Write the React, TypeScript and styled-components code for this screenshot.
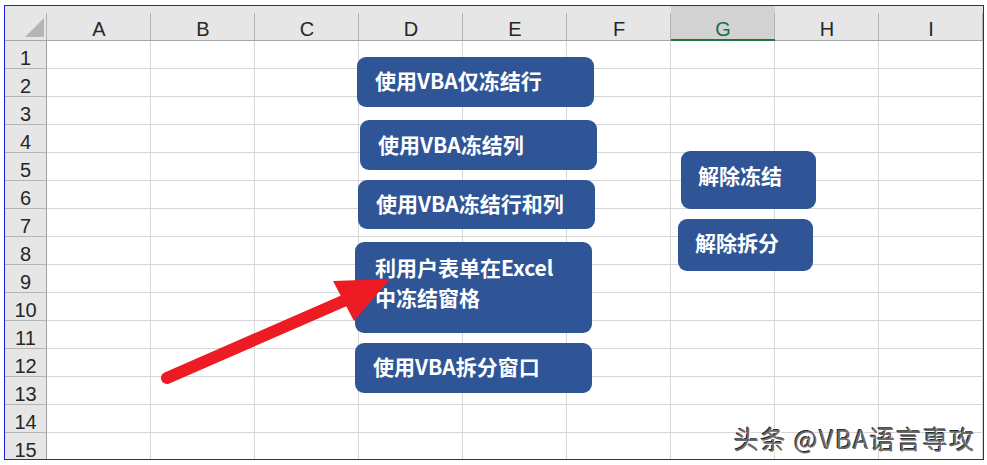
import React from "react";
import styled, { createGlobalStyle } from "styled-components";

const Global = createGlobalStyle`
  html, body { margin: 0; padding: 0; background: #ffffff; }
  body { font-family: "Liberation Sans", "Noto Sans CJK SC", sans-serif; }
  * { box-sizing: border-box; }
`;

const Page = styled.div`
  position: relative;
  width: 987px;
  height: 465px;
  overflow: hidden;
  background: #ffffff;
  padding: 5px 0 0 4px;
`;

const Frame = styled.div`
  width: 980px;
  height: 455px;
  border: 1px solid #1f1fe6;
  overflow: hidden;
  display: grid;
  grid-template-columns: 42px repeat(9, 104px);
  grid-template-rows: 35px repeat(15, 28px);
  background: #ffffff;
`;

const HeaderBase = styled.div`
  background:
    linear-gradient(#b1b1b1, #b1b1b1) right 7px / 1px calc(100% - 7px) no-repeat,
    #e6e6e6;
  border-bottom: 1px solid #a6a6a6;
`;

const Corner = styled(HeaderBase)`
  display: flex;
  align-items: flex-end;
  justify-content: flex-end;
  padding: 0 3px 3px 0;
`;

const ColHeader = styled(HeaderBase)<{ $selected?: boolean }>`
  display: flex;
  align-items: flex-end;
  justify-content: center;
  padding-bottom: ${(p) => (p.$selected ? "0px" : "1px")};
  font-family: "Liberation Sans", sans-serif;
  font-size: 20px;
  line-height: 20px;
  color: ${(p) => (p.$selected ? "#1f6b47" : "#262626")};
  background:
    linear-gradient(#b1b1b1, #b1b1b1) right 7px / 1px calc(100% - 7px) no-repeat,
    ${(p) => (p.$selected ? "#d2d2d2" : "#e6e6e6")};
  border-bottom: ${(p) => (p.$selected ? "2px solid #217346" : "1px solid #a6a6a6")};
`;

const RowHeader = styled.div`
  display: flex;
  align-items: flex-end;
  justify-content: center;
  background: #e6e6e6;
  border-right: 1px solid #9e9e9e;
  border-bottom: 1px solid #b4b4b4;
  font-family: "Liberation Sans", sans-serif;
  font-size: 20px;
  line-height: 20px;
  color: #262626;
`;

const Cell = styled.div`
  border-right: 1px solid #d6d6d6;
  border-bottom: 1px solid #d6d6d6;
`;

const Shape = styled.div<{ $x: number; $y: number; $w: number; $h: number; $pl: number; $pt: number }>`
  position: absolute;
  left: ${(p) => p.$x}px;
  top: ${(p) => p.$y}px;
  width: ${(p) => p.$w}px;
  height: ${(p) => p.$h}px;
  padding: ${(p) => p.$pt}px 0 0 ${(p) => p.$pl}px;
  background: #2f5597;
  border-radius: 9px;
  color: #ffffff;
  font-family: "Noto Sans CJK SC", "Noto Sans", sans-serif;
  font-weight: 700;
  font-size: 21px;
  line-height: 30px;
  white-space: nowrap;
`;

const ArrowLayer = styled.svg`
  position: absolute;
  left: 0;
  top: 0;
  width: 987px;
  height: 465px;
  pointer-events: none;
`;

const Watermark = styled.div`
  position: absolute;
  left: 734px;
  top: 424px;
  font-family: "Noto Sans CJK SC", sans-serif;
  font-weight: 400;
  font-size: 25px;
  letter-spacing: 1.5px;
  line-height: 28px;
  color: #6a6a6a;
  white-space: nowrap;
  text-shadow: 1px 1px 0 #ffffff, -1px -1px 0 #2a2a2a;
`;

const columns = ["A", "B", "C", "D", "E", "F", "G", "H", "I"];
const rows = Array.from({ length: 15 }, (_, i) => i + 1);

const shapes = [
  { x: 357, y: 57, w: 237, h: 50, pl: 18, pt: 8, lines: ["使用VBA仅冻结行"] },
  { x: 360, y: 120, w: 237, h: 50, pl: 18, pt: 9, lines: ["使用VBA冻结列"] },
  { x: 358, y: 180, w: 237, h: 49, pl: 18, pt: 8, lines: ["使用VBA冻结行和列"] },
  { x: 355, y: 242, w: 237, h: 91, pl: 20, pt: 10, lines: ["利用户表单在Excel", "中冻结窗格"] },
  { x: 355, y: 343, w: 237, h: 50, pl: 18, pt: 8, lines: ["使用VBA拆分窗口"] },
  { x: 681, y: 151, w: 135, h: 58, pl: 17, pt: 9, lines: ["解除冻结"] },
  { x: 678, y: 219, w: 135, h: 52, pl: 17, pt: 8, lines: ["解除拆分"] },
];

export default function App() {
  return (
    <Page>
      <Global />
      <Frame>
        <Corner>
          <svg width="19" height="19" viewBox="0 0 19 19">
            <polygon points="0,19 19,19 19,0" fill="#b5b5b5" />
          </svg>
        </Corner>
        {columns.map((c) => (
          <ColHeader key={c} $selected={c === "G"}>
            {c}
          </ColHeader>
        ))}
        {rows.map((r) => (
          <React.Fragment key={r}>
            <RowHeader>{r}</RowHeader>
            {columns.map((c) => (
              <Cell key={c + r} />
            ))}
          </React.Fragment>
        ))}
      </Frame>
      {shapes.map((s, i) => (
        <Shape key={i} $x={s.x} $y={s.y} $w={s.w} $h={s.h} $pl={s.pl} $pt={s.pt}>
          {s.lines.map((l, j) => (
            <div key={j}>{l}</div>
          ))}
        </Shape>
      ))}
      <ArrowLayer viewBox="0 0 987 465">
        <line x1="167" y1="378" x2="348" y2="299" stroke="#ed1c24" strokeWidth="12" strokeLinecap="round" />
        <polygon points="333,281 390,279 354,321" fill="#ed1c24" />
      </ArrowLayer>
      <Watermark>头条 @VBA语言専攻</Watermark>
    </Page>
  );
}
